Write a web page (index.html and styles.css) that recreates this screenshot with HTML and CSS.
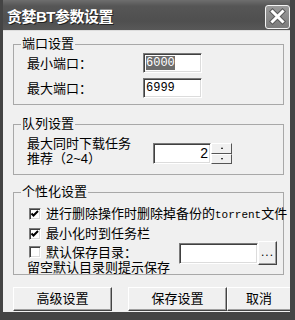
FILE: index.html
```html
<!DOCTYPE html>
<html lang="zh-CN">

<head>
    <meta charset="UTF-8">
    <title>贪婪BT参数设置</title>
    <link rel="stylesheet" href="styles.css">
</head>

<body>
    <div class="window">
        <div class="titlebar">
            <span class="title">贪婪BT参数设置</span>
            <span class="close">
                <svg width="25" height="24" viewBox="0 0 25 24">
                    <path d="M7.5 6.5 L17.5 16.5 M17.5 6.5 L7.5 16.5" stroke="#5a5a5a" stroke-width="5" stroke-linecap="square" fill="none" />
                    <path d="M7.5 6.5 L17.5 16.5 M17.5 6.5 L7.5 16.5" stroke="#fff" stroke-width="3" stroke-linecap="square" fill="none" />
                </svg>
            </span>
        </div>
        <div class="client">
            <!-- 端口 -->
            <fieldset class="group">
                <legend>端口设置</legend>
                <div class="body port">
                    <div class="row">
                        <span class="label">最小端口：</span>
                        <span class="field"><span class="sel">6000</span></span>
                    </div>
                    <div class="row">
                        <span class="label">最大端口：</span>
                        <span class="field">6999</span>
                    </div>
                </div>
            </fieldset>
            <!-- 队列 -->
            <fieldset class="group queue">
                <legend>队列设置</legend>
                <div class="body queue-body">
                    <div class="qlabel">
                        <div>最大同时下载任务</div>
                        <div>推荐（2~4）</div>
                    </div>
                    <div class="spin">
                        <span class="spin-field">2</span>
                        <span class="spin-btns">
                            <span class="spin-btn"><i class="up"></i></span>
                            <span class="spin-btn"><i class="down"></i></span>
                        </span>
                    </div>
                </div>
            </fieldset>
            <!-- 个性化 -->
            <fieldset class="group custom">
                <legend>个性化设置</legend>
                <div class="body custom-body">
                    <div class="check-row r1">
                        <span class="box"><svg width="10" height="10"><path d="M1.5 4.5 L3.5 6.5 L8 2" stroke="#000" stroke-width="2" fill="none" /></svg></span>
                        <span>进行删除操作时删除掉备份的<span class="latin">torrent</span>文件</span>
                    </div>
                    <div class="check-row r2">
                        <span class="box"><svg width="10" height="10"><path d="M1.5 4.5 L3.5 6.5 L8 2" stroke="#000" stroke-width="2" fill="none" /></svg></span>
                        <span>最小化时到任务栏</span>
                    </div>
                    <div class="dir-row">
                        <div class="dir-left">
                            <div class="check-row r3"><span class="box"></span><span>默认保存目录：</span></div>
                            <div class="hint">留空默认目录则提示保存</div>
                        </div>
                        <div class="dir-right">
                            <span class="path"></span>
                            <span class="browse">...</span>
                        </div>
                    </div>
                </div>
            </fieldset>
            <div class="buttons">
                <span class="btn b1">高级设置</span>
                <span class="btn b2">保存设置</span>
                <span class="btn b3">取消</span>
            </div>
        </div>
    </div>
</body>

</html>
```

FILE: styles.css
```css
* {
    margin: 0;
    padding: 0;
    box-sizing: border-box;
}

body {
    font-family: "Liberation Sans", "Noto Sans CJK SC", sans-serif;
    font-size: 13px;
    line-height: 15px;
    color: #000;
    background: #fff;
}

.window {
    width: 295px;
    height: 320px;
    border-left: 3px solid #444;
    border-right: 5px solid #444;
    border-bottom: 8px solid #444;
    overflow: hidden;
    background: #f0f0f0;
}

.titlebar {
    height: 30px;
    padding: 4px 0 0 4px;
    display: flex;
    align-items: center;
    justify-content: space-between;
    background: linear-gradient(#6e6e6e, #565656 20%, #4f4f4f 70%, #585858);
}

.title {
    color: #fff;
    font-size: 15px;
    font-weight: bold;
    line-height: 16px;
    letter-spacing: -0.5px;
    text-shadow: 1px 1px 0 #222;
}

.close {
    width: 25px;
    height: 24px;
    border: 1px solid #f4f4f4;
    border-radius: 3px;
    background: linear-gradient(#9a9a9a, #7c7c7c);
    display: flex;
}

.close svg {
    margin: -1px;
}

.client {
    height: 282px;
    padding-top: 6px;
    border-top: 1px solid #ddd;
}

.group {
    margin: 0 6px 0 10px;
    padding: 0;
    min-width: 0;
    border: 1px solid #a8a8a8;
}

.group legend {
    margin-left: 7px;
    padding: 0 1px;
    line-height: 14px;
}

.body {
    padding-left: 13px;
}

.port {
    padding-top: 2px;
    padding-bottom: 6px;
}

.row {
    display: flex;
    align-items: center;
    height: 20px;
}

.row + .row {
    margin-top: 5px;
}

.label {
    width: 116px;
}

.field,
.spin-field,
.path {
    display: block;
    background: #fff;
    border-top: 1px solid #7a7a7a;
    border-left: 1px solid #7a7a7a;
    border-right: 1px solid #fff;
    border-bottom: 1px solid #fff;
    box-shadow: inset 1px 1px 0 #404040, inset -1px -1px 0 #dcdcdc;
}

.field {
    width: 59px;
    height: 20px;
    padding: 2px 0 0 2px;
    font-family: "Liberation Mono", monospace;
    font-size: 12px;
    line-height: 14px;
}

.sel {
    background: #6c6c6c;
    color: #fff;
}

.queue {
    margin-top: 12px;
}

.queue-body {
    display: flex;
    padding-top: 5px;
    padding-bottom: 8px;
}

.qlabel {
    width: 126px;
}

.spin {
    display: flex;
    margin-top: 7px;
}

.spin-field {
    width: 58px;
    height: 21px;
    padding-right: 2px;
    text-align: right;
    line-height: 19px;
    font-size: 14px;
}

.spin-btns {
    display: flex;
    flex-direction: column;
}

.spin-btn {
    width: 21px;
    height: 10.5px;
    background: #f0f0f0;
    border-top: 1px solid #fff;
    border-left: 1px solid #fff;
    border-right: 1px solid #555;
    border-bottom: 1px solid #555;
    display: flex;
    align-items: center;
    justify-content: center;
}

.spin-btn i {
    width: 0;
    height: 0;
    border-left: 1.5px solid transparent;
    border-right: 1.5px solid transparent;
}

.spin-btn .up {
    border-bottom: 2px solid #000;
}

.spin-btn .down {
    border-top: 2px solid #000;
}

.custom {
    margin-top: 10px;
}

.custom-body {
    padding-top: 5px;
    white-space: nowrap;
}

.check-row {
    display: flex;
    align-items: center;
}

.r1 {
    height: 20px;
}

.r2 {
    height: 19px;
}

.r3 {
    height: 18px;
}

.box {
    width: 12px;
    height: 12px;
    margin: 0 5px 0 2px;
    flex-shrink: 0;
    background: #fff;
    border-top: 1px solid #7a7a7a;
    border-left: 1px solid #7a7a7a;
    border-right: 1px solid #fff;
    border-bottom: 1px solid #fff;
    box-shadow: inset 1px 1px 0 #404040, inset -1px -1px 0 #dcdcdc;
}

.box svg {
    display: block;
}

.latin {
    font-family: "Liberation Mono", monospace;
    font-size: 11px;
}

.dir-row {
    display: flex;
}

.dir-left {
    width: 152px;
}

.hint {
    line-height: 13px;
    margin-top: 0;
}

.dir-right {
    display: flex;
    align-items: flex-start;
    margin-top: -2px;
}

.path {
    width: 79px;
    height: 21px;
    margin-top: 2px;
}

.browse {
    width: 19px;
    height: 24px;
    background: #f0f0f0;
    border-top: 1px solid #fff;
    border-left: 1px solid #fff;
    border-right: 1px solid #444;
    border-bottom: 1px solid #444;
    box-shadow: inset -1px -1px 0 #a0a0a0;
    font-size: 12px;
    line-height: 20px;
    text-align: center;
    letter-spacing: 1px;
}

.buttons {
    display: flex;
    margin: 12px 0 0 10px;
}

.btn {
    height: 24px;
    background: #f0f0f0;
    border-top: 1px solid #fff;
    border-left: 1px solid #fff;
    border-right: 1px solid #444;
    border-bottom: 1px solid #444;
    box-shadow: inset -1px -1px 0 #a0a0a0;
    font-size: 13px;
    line-height: 22px;
    text-align: center;
    flex-shrink: 0;
}

.b1,
.b2 {
    width: 99px;
}

.b2 {
    margin-left: 16px;
}

.b3 {
    width: 70px;
    padding-right: 6px;
}
```
